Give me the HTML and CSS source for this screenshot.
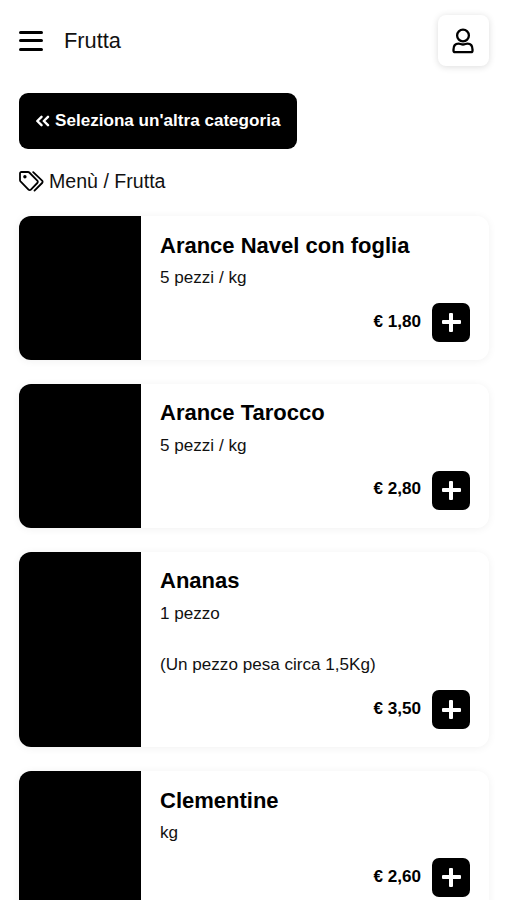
FILE: index.html
```html
<!DOCTYPE html>
<html lang="it">
  <head>
    <meta charset="UTF-8" />
    <meta name="viewport" content="width=device-width, initial-scale=1.0" />
    <title>Frutta</title>
    <link rel="stylesheet" href="styles.css">
  </head>
  <body>
    <header class="topbar">
      <div class="menu-toggle">
        <span></span>
        <span></span>
        <span></span>
      </div>
      <h1 class="page-title">Frutta</h1>
      <a class="account">
        <svg width="22" height="26" viewBox="0 0 22 26" fill="none" stroke="#000" stroke-width="2.3">
          <circle cx="11" cy="7.500" r="5.900" />
          <path d="M1.500 21.500c0-3.700 2-5.900 5-5.900 1.600 0 2.600.9 4.500.9s2.900-.9 4.500-.9c3 0 5 2.200 5 5.900v1.300c0 .9-.6 1.400-1.500 1.400H3c-.9 0-1.500-.5-1.500-1.400z" />
        </svg>
      </a>
    </header>

    <main>
      <a class="back-button">
        <svg width="14" height="12" viewBox="0 0 14 12" fill="none" stroke="#fff" stroke-width="2.400" stroke-linecap="round" stroke-linejoin="round">
          <path d="M5.500 1.800L1.300 6l4.200 4.200M12 1.800L7.800 6l4.200 4.200" />
        </svg>
        <span>Seleziona un'altra categoria</span>
      </a>

      <div class="breadcrumb">
        <svg width="25" height="21" viewBox="0 0 25 21" fill="none" stroke="#000" stroke-width="1.800" stroke-linejoin="round" stroke-linecap="round">
          <path d="M1 2.500v6.500c0 .5.2 1 .5 1.400l8 8.200c.7.7 1.700.7 2.400 0l6.400-6.600c.7-.7.7-1.700 0-2.400l-8-8.100A2 2 0 0 0 9 1H2.500C1.600 1 1 1.600 1 2.500z" />
          <path d="M14.200 1.200l8.900 8.400c.7.7.7 1.700 0 2.400l-7.600 7.600" />
          <circle cx="5.900" cy="5.700" r="1.700" fill="#000" stroke="none" />
        </svg>
        <span>Menù / Frutta</span>
      </div>

      <div class="product">
        <div class="photo"></div>
        <div class="info">
          <h2>Arance Navel con foglia</h2>
          <p>5 pezzi / kg</p>
          <div class="buy">
            <span class="price">€ 1,80</span>
            <div class="add"></div>
          </div>
        </div>
      </div>

      <div class="product">
        <div class="photo"></div>
        <div class="info">
          <h2>Arance Tarocco</h2>
          <p>5 pezzi / kg</p>
          <div class="buy">
            <span class="price">€ 2,80</span>
            <div class="add"></div>
          </div>
        </div>
      </div>

      <div class="product">
        <div class="photo"></div>
        <div class="info">
          <h2>Ananas</h2>
          <p>1 pezzo<br /><br />(Un pezzo pesa circa 1,5Kg)</p>
          <div class="buy">
            <span class="price">€ 3,50</span>
            <div class="add"></div>
          </div>
        </div>
      </div>

      <div class="product">
        <div class="photo"></div>
        <div class="info">
          <h2>Clementine</h2>
          <p>kg</p>
          <div class="buy">
            <span class="price">€ 2,60</span>
            <div class="add"></div>
          </div>
        </div>
      </div>
    </main>
  </body>
</html>
```

FILE: styles.css
```css
* {
  box-sizing: border-box;
}
html {
  height: 100%;
  overflow: hidden;
}
body {
  font-family: "Liberation Sans", Arial, sans-serif;
  font-size: 17.1px;
  line-height: 1.5;
  margin: 0;
  padding: 15px 18px 0 19px;
  height: 100%;
  overflow: hidden;
  background: #fff;
  color: #111;
}
.topbar {
  display: flex;
  align-items: center;
  height: 51px;
}
.menu-toggle {
  display: flex;
  flex-direction: column;
  gap: 5.5px;
  width: 24px;
  margin-right: 21px;
}
.menu-toggle span {
  height: 3px;
  border-radius: 2px;
  background: #000;
}
.page-title {
  flex: 1;
  margin: 0;
  padding-top: 2px;
  font-size: 21.8px;
  font-weight: normal;
}
.account {
  display: flex;
  align-items: center;
  justify-content: center;
  width: 51px;
  height: 51px;
  border-radius: 8px;
  background: #fff;
  box-shadow: 0 1px 7px rgba(0, 0, 0, 0.14);
}
.account svg {
  margin-right: 1px;
}
.back-button {
  display: flex;
  align-items: center;
  gap: 5px;
  width: 278px;
  height: 56px;
  margin-top: 27px;
  padding-left: 17px;
  border-radius: 9px;
  background: #000;
  color: #fff;
  font-weight: bold;
  white-space: nowrap;
}
.breadcrumb {
  display: flex;
  align-items: center;
  gap: 5px;
  height: 30px;
  margin: 17px 0 20px;
  font-size: 19.6px;
}
.breadcrumb span {
  padding-top: 2px;
}
.product {
  display: flex;
  margin-bottom: 24.2px;
  border-radius: 12px;
  background: #fff;
  box-shadow: 0 1px 8px rgba(0, 0, 0, 0.06);
}
.photo {
  width: 122px;
  border-radius: 12px 0 0 12px;
  background: #000;
}
.info {
  flex: 1;
  padding: 16.5px 19px 18px 19px;
}
.info h2 {
  margin: 0 0 6px;
  font-size: 22px;
  line-height: 26.4px;
  color: #000;
}
.info p {
  margin: 0 0 12.5px;
}
.buy {
  display: flex;
  justify-content: flex-end;
  align-items: center;
  gap: 11px;
}
.price {
  padding-bottom: 2px;
  font-weight: bold;
  color: #000;
}
.add {
  display: grid;
  place-items: center;
  width: 38px;
  height: 38.7px;
  border-radius: 7px;
  background: #000;
}
.add::before,
.add::after {
  content: "";
  grid-area: 1 / 1;
  width: 19px;
  height: 4px;
  border-radius: 1px;
  background: #fff;
}
.add::after {
  width: 4px;
  height: 19px;
}
```
